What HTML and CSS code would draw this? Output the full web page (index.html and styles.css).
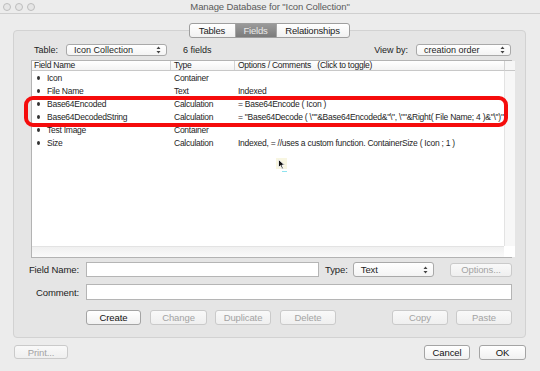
FILE: index.html
```html
<!doctype html>
<html>
<head>
<meta charset="utf-8">
<title>Manage Database</title>
<link rel="stylesheet" href="styles.css">
</head>
<body>
<div class="window">
    <div class="titlebar">
        <div class="lights"><span></span><span></span><span></span></div>
        <div class="title">Manage Database for "Icon Collection"</div>
        <div></div>
    </div>
    <div class="main">
        <div class="tabs">
            <span class="t-tables">Tables</span>
            <span class="t-fields on">Fields</span>
            <span class="t-rel">Relationships</span>
        </div>
        <div class="group">
            <div class="toprow">
                <span class="lbl">Table:</span>
                <div class="popup p-table">Icon Collection<svg width="5" height="8" viewBox="0 0 5 8"><path d="M0.5 3L2.5 0.5L4.5 3ZM0.5 5L2.5 7.5L4.5 5Z" fill="#444"/></svg></div>
                <span class="count">6 fields</span>
                <span class="lbl viewby">View by:</span>
                <div class="popup p-view">creation order<svg width="5" height="8" viewBox="0 0 5 8"><path d="M0.5 3L2.5 0.5L4.5 3ZM0.5 5L2.5 7.5L4.5 5Z" fill="#444"/></svg></div>
            </div>
            <div class="list">
                <div class="head">
                    <span>Field Name</span>
                    <span>Type</span>
                    <span>Options / Comments &nbsp; (Click to toggle)</span>
                </div>
                <div class="head-corner"></div>
                <div class="rows">
                    <div class="row"><span class="name"><i></i>Icon</span><span>Container</span><span></span></div>
                    <div class="row"><span class="name"><i></i>File Name</span><span>Text</span><span>Indexed</span></div>
                    <div class="row"><span class="name"><i></i>Base64Encoded</span><span>Calculation</span><span>= Base64Encode ( Icon )</span></div>
                    <div class="row"><span class="name"><i></i>Base64DecodedString</span><span>Calculation</span><span>= "Base64Decode ( \""&amp;Base64Encoded&amp;"\", \""&amp;Right( File Name; 4 )&amp;"\")"</span></div>
                    <div class="row"><span class="name"><i></i>Test Image</span><span>Container</span><span></span></div>
                    <div class="row"><span class="name"><i></i>Size</span><span>Calculation</span><span>Indexed, = //uses a custom function. ContainerSize ( Icon ; 1 )</span></div>
                </div>
                <div class="vbar"></div>
                <div class="hbar"></div>
                <div class="corner"></div>
                <div class="mark"></div>
                <div class="cursor">
                    <svg width="8" height="11" viewBox="0 0 8 11"><path d="M0.5 0.5L0.5 8.5L2.5 6.6L4 10L5.3 9.4L3.9 6.1L6.6 6.1Z" fill="#111" stroke="#fff" stroke-width="0.8"/></svg>
                </div>
            </div>
            <div class="frow">
                <span class="flabel">Field Name:</span>
                <div class="input in-name"></div>
                <span class="tlabel">Type:</span>
                <div class="popup p-type">Text<svg width="5" height="8" viewBox="0 0 5 8"><path d="M0.5 3L2.5 0.5L4.5 3ZM0.5 5L2.5 7.5L4.5 5Z" fill="#444"/></svg></div>
                <span class="btn off b-opt">Options...</span>
            </div>
            <div class="frow r2">
                <span class="flabel">Comment:</span>
                <div class="input in-comment"></div>
            </div>
            <div class="frow r3">
                <span class="btn b-create">Create</span>
                <span class="btn off b-change">Change</span>
                <span class="btn off b-dup">Duplicate</span>
                <span class="btn off b-del">Delete</span>
                <span class="btn off b-copy">Copy</span>
                <span class="btn off b-paste">Paste</span>
            </div>
        </div>
        <div class="footer">
            <span class="btn off b-print">Print...</span>
            <span class="btn b-cancel">Cancel</span>
            <span class="btn b-ok">OK</span>
        </div>
    </div>
</div>
</body>
</html>
```

FILE: styles.css
```css
* { padding: 0; margin: 0; box-sizing: border-box; }
body { background: #ececec; font-family: "Liberation Sans", Arial, sans-serif; color: #1e1e1e; }
.window { width: 540px; height: 371px; background: #ececec; overflow: hidden; }

.titlebar { height: 14px; border-bottom: 1px solid #cfcfcf; display: grid; grid-template-columns: 1fr auto 1fr; align-items: center; }
.lights { display: flex; gap: 4px; padding-left: 3px; }
.lights span { width: 8px; height: 8px; border-radius: 50%; border: 1px solid #bdbdbd; background: #e6e6e6; }
.title { font-size: 9.5px; color: #5a5a5a; letter-spacing: -0.1px; }

.main { display: flex; flex-direction: column; }
.tabs { align-self: center; margin: 9px 0 0 -2px; height: 15px; display: flex; border: 1px solid #9e9e9e; border-radius: 3px; background: linear-gradient(#ffffff, #f1f1f1); position: relative; z-index: 1; font-size: 9.5px; letter-spacing: -0.2px; }
.tabs span { display: flex; align-items: center; justify-content: center; border-left: 1px solid #a5a5a5; color: #1b1b1b; }
.tabs span:first-child { border-left: none; }
.t-tables { width: 45px; }
.t-fields { width: 41px; }
.t-rel { width: 73px; }
.tabs .on { background: linear-gradient(#9a9a9a, #7b7b7b); color: #e9e9e9; }

.group { margin: -8px 14px 0 13px; border: 1px solid #d2d2d2; border-radius: 4px; background: #e5e5e5; padding: 13px 13px 12px 17px; display: flex; flex-direction: column; }

.toprow { height: 12px; display: flex; align-items: center; padding-left: 3px; font-size: 9px; }
.lbl { color: #222; }
.count { margin-left: 16px; }
.viewby { margin-left: auto; }
.popup { height: 12px; display: flex; align-items: center; justify-content: space-between; padding: 0 5px 0 7px; background: linear-gradient(#ffffff, #f4f4f4); border: 1px solid #a9a9a9; border-radius: 3px; font-size: 9px; }
.p-table { width: 101px; margin-left: 8px; }
.p-view { width: 95px; margin-left: 8px; margin-right: 1px; }

.list { margin-top: 4px; height: 198px; border: 1px solid #b3b3b3; background: #fff; display: grid; grid-template-columns: 1fr 11px; grid-template-rows: 10px 1fr 11px; position: relative; font-size: 8.5px; letter-spacing: -0.25px; }
.head { display: grid; grid-template-columns: 139px 64px 1fr; background: linear-gradient(#ffffff, #f3f3f3); border-bottom: 1px solid #c8c8c8; }
.head span { border-right: 1px solid #d3d3d3; padding-left: 3px; line-height: 9px; color: #222; }
.head span:first-child { padding-left: 2px; }
.head span:last-child { border-right: none; }
.head-corner { background: #f6f6f6; border-bottom: 1px solid #c8c8c8; border-left: 1px solid #d3d3d3; }
.row { height: 13px; display: grid; grid-template-columns: 139px 64px 1fr; align-items: center; white-space: nowrap; }
.row span { padding-left: 3px; }
.row .name { display: flex; align-items: center; padding-left: 5px; }
.row i { width: 3px; height: 4px; border-radius: 50%; background: #333; margin-right: 7px; }
.vbar { background: #f7f7f7; border-left: 1px solid #e3e3e3; }
.hbar { background: linear-gradient(#f0f0f0, #fafafa); border-top: 1px solid #e3e3e3; }
.corner { background: #fff; }

.mark { position: absolute; left: -8px; top: 35px; width: 484px; height: 31px; border: 4px solid #f50c0c; border-radius: 9px; }
.cursor { position: absolute; left: 244px; top: 97px; width: 11px; height: 11px; padding: 1px 0 0 2px; background: rgba(244, 240, 205, 0.6); }
.cursor::after { content: ""; position: absolute; left: 6px; top: 13px; width: 5px; height: 1px; background: #8fe3ef; }
.cursor svg { display: block; }

.frow { display: flex; align-items: center; font-size: 9.5px; letter-spacing: -0.1px; margin-top: 4px; height: 15px; }
.frow.r2 { margin-top: 7px; height: 16px; }
.frow.r3 { margin-top: 10px; padding-left: 55px; }
.flabel { width: 56px; margin-left: -8px; text-align: right; margin-right: 7px; color: #222; white-space: nowrap; }
.input { height: 100%; background: #fff; border: 1px solid #b5b5b5; }
.in-name { width: 233px; }
.in-comment { flex: 1; }
.tlabel { margin-left: 6px; }
.p-type { width: 81px; height: 15px; margin-left: 5px; font-size: 9.5px; }

.btn { height: 15px; display: flex; align-items: center; justify-content: center; background: linear-gradient(#ffffff, #f1f1f1); border: 1px solid #a4a4a4; border-radius: 3px; font-size: 9.5px; color: #111; letter-spacing: -0.1px; }
.btn.off { color: #a3a3a3; border-color: #cacaca; background: linear-gradient(#f9f9f9, #efefef); }
.b-opt { width: 62px; margin-left: auto; height: 14px; }
.b-create { width: 55px; }
.b-change { width: 57px; margin-left: 9px; }
.b-dup { width: 56px; margin-left: 8px; }
.b-del { width: 56px; margin-left: 9px; }
.b-copy { width: 56px; margin-left: auto; }
.b-paste { width: 56px; margin-left: 8px; }

.footer { display: flex; margin: 7px 14px 0 14px; height: 14px; }
.b-print { width: 54px; height: 14px; }
.b-cancel { width: 46px; margin-left: auto; }
.b-ok { width: 47px; margin-left: 9px; }
```
